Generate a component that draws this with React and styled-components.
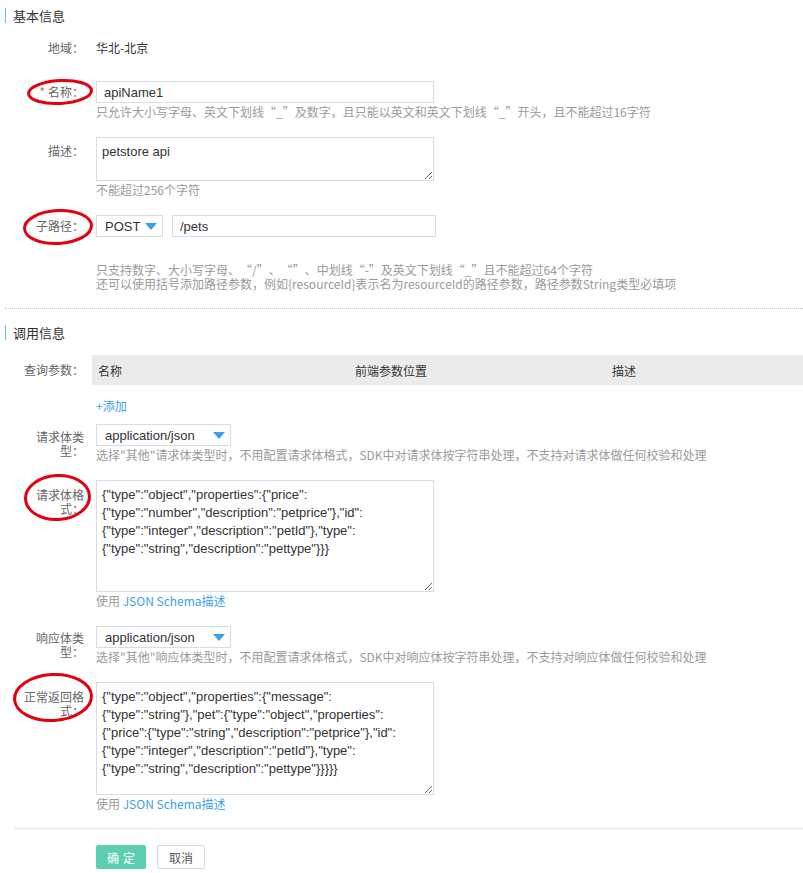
import React from "react"
import styled, { createGlobalStyle } from "styled-components"

const COLORS = {
  TEXT: "#333333",
  LABEL: "#666666",
  HINT: "#9a9a9a",
  BORDER: "#d5dee6",
  LINK: "#3a9fe8",
  ACCENT: "#5ccfb0",
  MARK: "#e3000f",
  TABLE_HEAD: "#ebebeb",
}

const LATIN = `"Liberation Sans", "Noto Sans CJK SC", sans-serif`
const CJK = `"Noto Sans CJK SC", "Liberation Sans", sans-serif`

const GlobalStyle = createGlobalStyle`
  html, body {
    margin: 0;
    padding: 0;
    background: #fff;
  }
  body {
    font-family: ${CJK};
    font-size: 12px;
    color: ${COLORS.TEXT};
    text-spacing-trim: space-all;
  }
  * { box-sizing: border-box; }
`

const Page = styled.div`
  width: 803px;
  padding-top: 8px;
`

// <SectionTitle />

const SectionTitle = styled.h2`
  margin: 0 0 ${p => p.$gap}px 5px;
  padding-left: 7px;
  border-left: 1px solid ${COLORS.ACCENT};
  font-size: 13px;
  font-weight: normal;
  line-height: 15px;
  color: ${COLORS.TEXT};
`

// <FormItem />

const FormItem = styled.div`
  display: flex;
  align-items: flex-start;
  padding-left: 24px;
  margin-bottom: ${p => (p.$mb !== undefined ? p.$mb : 18)}px;
`

const Label = styled.label`
  position: relative;
  flex-shrink: 0;
  width: 60px;
  margin-right: 12px;
  padding-top: ${p => (p.$pt !== undefined ? p.$pt : 5)}px;
  text-align: right;
  line-height: 14px;
  color: ${COLORS.LABEL};
`

const Required = styled.span`
  color: #f0554a;
  margin-right: 3px;
`

const Field = styled.div`
  display: flex;
  flex-direction: column;
  align-items: flex-start;
`

const Value = styled.div`
  height: 22px;
  line-height: 22px;
  color: ${COLORS.TEXT};
`

const Hint = styled.div`
  margin-top: ${p => (p.$mt !== undefined ? p.$mt : 2)}px;
  line-height: 14px;
  color: ${COLORS.HINT};
  white-space: nowrap;
  text-spacing-trim: space-all;
`

const HintLine = styled.div`
  height: 14px;
`

const Link = styled.a`
  color: ${COLORS.LINK};
  text-decoration: none;
  cursor: pointer;
`

const TextInput = styled.input`
  width: ${p => p.$w}px;
  height: 22px;
  padding: 0 7px;
  border: 1px solid ${COLORS.BORDER};
  border-radius: 0;
  font: 13px ${LATIN};
  color: ${COLORS.TEXT};
  outline: none;
`

const TextArea = styled.textarea`
  display: block;
  width: 338px;
  height: ${p => p.$h}px;
  padding: 5px;
  border: 1px solid ${COLORS.BORDER};
  border-radius: 0;
  font: 13px/18px ${LATIN};
  color: ${COLORS.TEXT};
  outline: none;
  overflow: hidden;
`

const Inline = styled.div`
  display: flex;
  gap: 9px;
`

// <Select />

const SelectBox = styled.div`
  display: flex;
  align-items: center;
  justify-content: space-between;
  width: ${p => p.$w}px;
  height: 22px;
  padding: 0 5px 0 8px;
  border: 1px solid ${COLORS.BORDER};
  font: 13px ${LATIN};
  color: ${COLORS.TEXT};
  cursor: pointer;
`

const Caret = styled.span`
  width: 0;
  height: 0;
  border-left: 6px solid transparent;
  border-right: 6px solid transparent;
  border-top: 7px solid ${COLORS.LINK};
`

function Select({ width, children }) {
  return (
    <SelectBox $w={width}>
      <span>{children}</span>
      <Caret />
    </SelectBox>
  )
}

// <ParamTable />

const ParamTable = styled.div`
  width: 711px;
  margin-left: -4px;
`

const ParamHead = styled.div`
  display: grid;
  grid-template-columns: 257px 257px 1fr;
  align-items: center;
  height: 30px;
  padding-left: 6px;
  background: ${COLORS.TABLE_HEAD};
  color: ${COLORS.TEXT};
`

const AddLink = styled(Link)`
  display: block;
  margin-top: 14px;
  line-height: 14px;
`

// <Mark /> red annotation ellipse

const MarkSvg = styled.svg`
  position: absolute;
  left: ${p => p.$x}px;
  top: ${p => p.$y}px;
  overflow: visible;
  pointer-events: none;
`

function Mark({ x, y, w, h }) {
  return (
    <MarkSvg $x={x} $y={y} width={w} height={h}>
      <ellipse
        cx={w / 2}
        cy={h / 2}
        rx={w / 2 - 1.5}
        ry={h / 2 - 1.5}
        fill="none"
        stroke={COLORS.MARK}
        strokeWidth="3"
        transform={`rotate(-3 ${w / 2} ${h / 2})`}
      />
    </MarkSvg>
  )
}

const Divider = styled.div`
  margin: ${p => p.$mt}px 0 ${p => p.$mb}px ${p => p.$ml}px;
  border-top: 1px ${p => p.$style} ${p => p.$color};
`

// <Buttons />

const ButtonRow = styled.div`
  display: flex;
  gap: 11px;
  padding-left: 96px;
`

const Button = styled.button`
  width: ${p => p.$w}px;
  height: 24px;
  padding: 0;
  border: 1px solid ${p => (p.$primary ? COLORS.ACCENT : "#d3dae1")};
  border-radius: 2px;
  background: ${p => (p.$primary ? COLORS.ACCENT : "#fff")};
  color: ${p => (p.$primary ? "#fff" : "#555")};
  font: 12px ${CJK};
  letter-spacing: ${p => (p.$primary ? "4px" : "0")};
  text-indent: ${p => (p.$primary ? "4px" : "0")};
  cursor: pointer;
`

const REQUEST_SCHEMA =
  '{"type":"object","properties":{"price":\n{"type":"number","description":"petprice"},"id":\n{"type":"integer","description":"petId"},"type":\n{"type":"string","description":"pettype"}}}'

const RESPONSE_SCHEMA =
  '{"type":"object","properties":{"message":\n{"type":"string"},"pet":{"type":"object","properties":\n{"price":{"type":"string","description":"petprice"},"id":\n{"type":"integer","description":"petId"},"type":\n{"type":"string","description":"pettype"}}}}}'

export default function App() {
  return (
    <Page>
      <GlobalStyle />

      <SectionTitle $gap={14}>基本信息</SectionTitle>

      <FormItem $mb={22}>
        <Label $pt={4}>地域：</Label>
        <Value>华北-北京</Value>
      </FormItem>

      <FormItem>
        <Label $pt={4}>
          <Mark x={3} y={-2} w={66} h={26} />
          <Required>*</Required>名称：
        </Label>
        <Field>
          <TextInput $w={338} defaultValue="apiName1" />
          <Hint>只允许大小写字母、英文下划线“_”及数字，且只能以英文和英文下划线“_”开头，且不能超过16字符</Hint>
        </Field>
      </FormItem>

      <FormItem>
        <Label $pt={7}>描述：</Label>
        <Field>
          <TextArea $h={44} defaultValue="petstore api" />
          <Hint>不能超过256个字符</Hint>
        </Field>
      </FormItem>

      <FormItem $mb={0}>
        <Label $pt={4}>
          <Mark x={-1} y={-6} w={70} h={36} />
          子路径：
        </Label>
        <Field>
          <Inline>
            <Select width={67}>POST</Select>
            <TextInput $w={264} defaultValue="/pets" />
          </Inline>
          <Hint $mt={26}>
            <HintLine>只支持数字、大小写字母、“/”、“”、中划线“-”及英文下划线“_”且不能超过64个字符</HintLine>
            <HintLine>还可以使用括号添加路径参数，例如{"{resourceId}"}表示名为resourceId的路径参数，路径参数String类型必填项</HintLine>
          </Hint>
        </Field>
      </FormItem>

      <Divider $mt={17} $mb={16} $ml={5} $style="dotted" $color="#c8c8c8" />

      <SectionTitle $gap={15}>调用信息</SectionTitle>

      <FormItem $mb={11}>
        <Label $pt={8}>查询参数：</Label>
        <Field>
          <ParamTable>
            <ParamHead>
              <span>名称</span>
              <span>前端参数位置</span>
              <span>描述</span>
            </ParamHead>
          </ParamTable>
          <AddLink>+添加</AddLink>
        </Field>
      </FormItem>

      <FormItem>
        <Label $pt={6}>请求体类型：</Label>
        <Field>
          <Select width={135}>application/json</Select>
          <Hint>选择"其他"请求体类型时，不用配置请求体格式，SDK中对请求体按字符串处理，不支持对请求体做任何校验和处理</Hint>
        </Field>
      </FormItem>

      <FormItem>
        <Label $pt={8}>
          <Mark x={0} y={-6} w={67} h={47} />
          请求体格式：
        </Label>
        <Field>
          <TextArea $h={112} defaultValue={REQUEST_SCHEMA} />
          <Hint>
            使用 <Link>JSON Schema描述</Link>
          </Hint>
        </Field>
      </FormItem>

      <FormItem>
        <Label $pt={5}>响应体类型：</Label>
        <Field>
          <Select width={135}>application/json</Select>
          <Hint>选择"其他"响应体类型时，不用配置请求体格式，SDK中对响应体按字符串处理，不支持对响应体做任何校验和处理</Hint>
        </Field>
      </FormItem>

      <FormItem $mb={0}>
        <Label $pt={8}>
          <Mark x={-11} y={-9} w={80} h={49} />
          正常返回格式：
        </Label>
        <Field>
          <TextArea $h={113} defaultValue={RESPONSE_SCHEMA} />
          <Hint>
            使用 <Link>JSON Schema描述</Link>
          </Hint>
        </Field>
      </FormItem>

      <Divider $mt={17} $mb={16} $ml={14} $style="solid" $color="#e6e6e6" />

      <ButtonRow>
        <Button $primary $w={50}>确定</Button>
        <Button $w={48}>取消</Button>
      </ButtonRow>
    </Page>
  )
}
